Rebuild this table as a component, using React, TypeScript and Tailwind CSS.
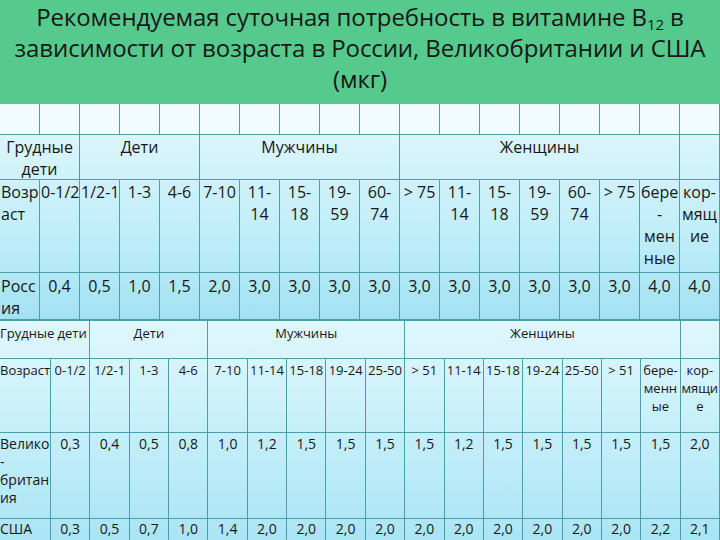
import React from 'react'

// Рекомендуемая суточная потребность в витамине B12 — two stacked tables on a slide
const LINE = 'border-[#4b9fab]'

type Cell = { t: string; span?: number; left?: boolean }

const T1_HEAD: Cell[] = [
  { t: 'Грудные\nдети', span: 2 },
  { t: 'Дети', span: 3 },
  { t: 'Мужчины', span: 5 },
  { t: 'Женщины', span: 7 },
  { t: '' },
]

const T1_AGE: Cell[] = [
  { t: 'Возр\nаст', left: true },
  { t: '0-1/2', left: true },
  { t: '1/2-1', left: true },
  ...['1-3', '4-6', '7-10', '11-\n14', '15-\n18', '19-\n59', '60-\n74', '> 75', '11-\n14', '15-\n18', '19-\n59', '60-\n74', '> 75', 'бере\n-\nмен\nные', 'кор-\nмящ\nие'].map((t) => ({ t })),
]

const T1_RU: Cell[] = [
  { t: 'Росс\nия', left: true },
  ...['0,4', '0,5', '1,0', '1,5', '2,0', ...Array(10).fill('3,0'), '4,0', '4,0'].map((t) => ({ t })),
]

const T2_HEAD: Cell[] = [
  { t: 'Грудные дети', span: 2, left: true },
  { t: 'Дети', span: 3 },
  { t: 'Мужчины', span: 5 },
  { t: 'Женщины', span: 7 },
  { t: '' },
]

const T2_AGE: Cell[] = [
  { t: 'Возраст', left: true },
  ...['0-1/2', '1/2-1', '1-3', '4-6', '7-10', '11-14', '15-18', '19-24', '25-50', '> 51', '11-14', '15-18', '19-24', '25-50', '> 51', 'бере-\nменн\nые', 'кор-\nмящи\nе'].map((t) => ({ t })),
]

const T2_UK: Cell[] = [
  { t: 'Велико\n-\nбритан\nия', left: true },
  ...['0,3', '0,4', '0,5', '0,8', '1,0', '1,2', '1,5', '1,5', '1,5', '1,5', '1,2', '1,5', '1,5', '1,5', '1,5', '1,5', '2,0'].map((t) => ({ t })),
]

const T2_US: Cell[] = [
  { t: 'США', left: true },
  ...['0,3', '0,5', '0,7', '1,0', '1,4', '2,0', '2,0', '2,0', '2,0', '2,0', '2,0', '2,0', '2,0', '2,0', '2,0', '2,2', '2,1'].map((t) => ({ t })),
]

const SPAN: Record<number, string> = { 1: 'col-span-1', 2: 'col-span-2', 3: 'col-span-3', 5: 'col-span-5', 7: 'col-span-7' }

function Row({ cells, cls }: { cells: Cell[]; cls: string }) {
  return (
    <>
      {cells.map((c, i) => (
        <div
          key={i}
          className={`${SPAN[c.span ?? 1]} border-r border-b ${LINE} ${cls} ${c.left ? 'text-left' : 'text-center'} whitespace-pre`}
        >
          {c.t}
        </div>
      ))}
    </>
  )
}

export default function App() {
  return (
    <div className="w-[720px] h-[540px] overflow-hidden bg-white text-neutral-900 font-['Open_Sans',sans-serif]">
      <div className="h-[104px] bg-[#56c98c] flex flex-col items-center text-[24px] leading-[31px] pt-[1px] tracking-[-0.1px] text-neutral-900">
        <p>
          Рекомендуемая суточная потребность в витамине B<sub className="text-[15px] leading-none">12</sub> в
        </p>
        <p>зависимости от возраста в России, Великобритании и США</p>
        <p>(мкг)</p>
      </div>

      {/* empty top row */}
      <div className="grid grid-cols-[repeat(18,40px)] h-[31px] bg-[#f2fbfd]">
        {Array.from({ length: 18 }).map((_, i) => (
          <div key={i} className={`border-r border-b ${LINE}`} />
        ))}
      </div>

      {/* Россия */}
      <div className="grid grid-cols-[repeat(18,40px)] grid-rows-[45px_93px_47px] bg-linear-to-b from-[#dbf5fb] via-[#c2eef9] to-[#a3e2f3] text-[16px] leading-[22px]">
        <Row cells={T1_HEAD} cls="pt-[1px] px-[1px]" />
        <Row cells={T1_AGE} cls="pt-[1px] px-[1px]" />
        <Row cells={T1_RU} cls="pt-[2px] px-[1px]" />
      </div>

      {/* Великобритания / США */}
      <div className={`grid grid-cols-[51px_repeat(17,1fr)] grid-rows-[38px_74px_86px_40px] border-t ${LINE} bg-linear-to-b from-[#e0f7fc] via-[#c3eef9] to-[#a5e3f4] text-[13px] leading-[18px]`}>
        <Row cells={T2_HEAD} cls="pt-[3px]" />
        <Row cells={T2_AGE} cls="pt-[2px]" />
        <Row cells={T2_UK} cls="pt-[2px] text-[14px]" />
        <Row cells={T2_US} cls="pt-[1px] text-[14px]" />
      </div>
    </div>
  )
}
